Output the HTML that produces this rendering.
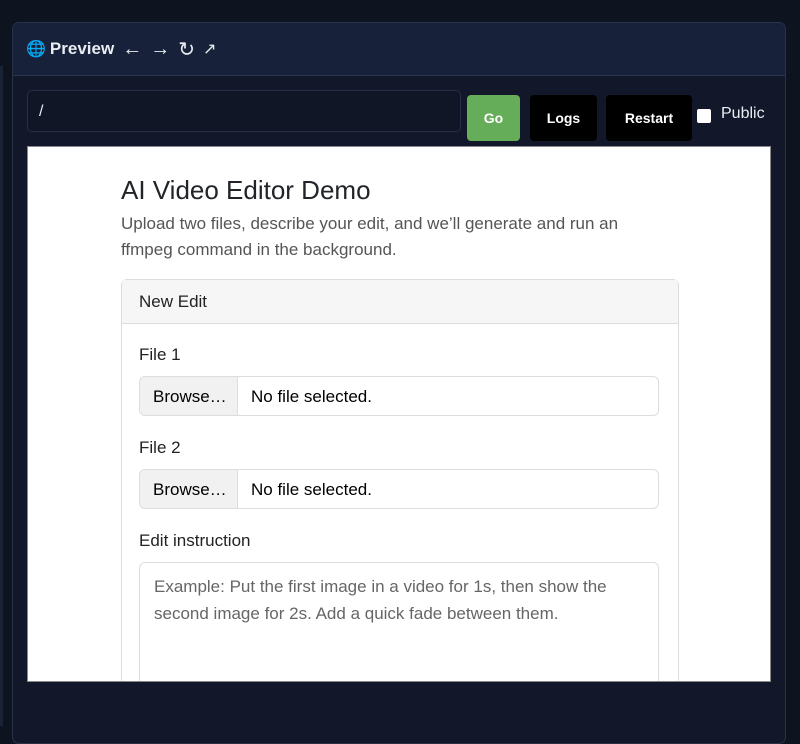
<!DOCTYPE html>
<html><head><style>
body{margin:0;width:800px;height:720px;background:#0e1320;font-family:"Liberation Sans",sans-serif;overflow:hidden;position:relative}
.lb{position:absolute;left:0;top:66px;width:3px;height:660px;background:#1a2236}
.panel{position:absolute;left:12px;top:22px;width:772px;height:720px;background:#121829;border:1px solid #283249;border-radius:7px;overflow:hidden}
.hdr{height:52px;background:#18213a;border-bottom:1px solid #2a3550;display:flex;align-items:center;padding-left:13px;color:#e8ecf3}
.hdr b{font-size:17px;margin-left:4px}
.hdr span{font-size:20px;margin-left:8px}
.url{position:absolute;left:14px;top:67px;width:434px;height:42px;background:#111626;border:1px solid #262f44;border-radius:5px;color:#e8ecf3;font-size:16px;line-height:42px;padding-left:11px;box-sizing:border-box}
.btn{position:absolute;top:72px;height:46px;border-radius:4px;color:#fff;font-weight:bold;font-size:14px;text-align:center;line-height:46px}
.frame{position:absolute;left:14px;top:123px;width:744px;height:536px;background:#fff;border:1px solid #888;box-sizing:border-box;overflow:hidden}
.c{position:absolute;left:93px;width:530px;color:#212529}
h1{margin:0;font-weight:500;font-size:26px}
.lead{color:#555;font-size:17px;line-height:26px}
.card{position:absolute;left:93px;top:132px;width:556px;height:420px;border:1px solid #ddd;border-radius:6px}
.ch{height:43px;background:#f6f6f6;border-bottom:1px solid #ddd;font-size:17px;line-height:43px;padding-left:17px;color:#222}
.lbl{position:absolute;left:17px;font-size:17px;color:#222}
.file{position:absolute;left:17px;width:520px;height:40px;border:1px solid #ddd;border-radius:6px;font-size:17px;line-height:40px;box-sizing:border-box;overflow:hidden}
.file i{font-style:normal;display:inline-block;width:98px;background:#f1f1f1;border-right:1px solid #ddd;padding-left:13px;box-sizing:border-box;margin-right:13px}
.ta{position:absolute;left:17px;top:282px;width:520px;height:130px;border:1px solid #ddd;border-radius:6px;box-sizing:border-box;padding:10px 14px;color:#666;font-size:17px;line-height:27px}
</style></head><body>
<div class="lb"></div>
<div class="panel">
<div class="hdr"><span style="margin:0;font-size:16px">🌐</span><b>Preview</b><span>←</span><span>→</span><span>↻</span><span style="font-size:16px">↗</span></div>
<div class="url">/</div>
<div class="btn" style="left:454px;width:53px;background:#66ad5a">Go</div>
<div class="btn" style="left:517px;width:67px;background:#000">Logs</div>
<div class="btn" style="left:593px;width:86px;background:#000">Restart</div>
<div style="position:absolute;left:684px;top:86px;width:14px;height:14px;background:#fff;border-radius:2px"></div>
<div style="position:absolute;left:708px;top:82px;color:#e8ecf3;font-size:16px">Public</div>
<div class="frame">
<div class="c" style="top:28px"><h1>AI Video Editor Demo</h1></div>
<div class="c lead" style="top:64px">Upload two files, describe your edit, and we’ll generate and run an ffmpeg command in the background.</div>
<div class="card">
<div class="ch">New Edit</div>
<div class="lbl" style="top:65px">File 1</div>
<div class="file" style="top:96px"><i>Browse…</i>No file selected.</div>
<div class="lbl" style="top:158px">File 2</div>
<div class="file" style="top:189px"><i>Browse…</i>No file selected.</div>
<div class="lbl" style="top:251px">Edit instruction</div>
<div class="ta">Example: Put the first image in a video for 1s, then show the second image for 2s. Add a quick fade between them.</div>
</div>
</div>
</div>
</body></html>
